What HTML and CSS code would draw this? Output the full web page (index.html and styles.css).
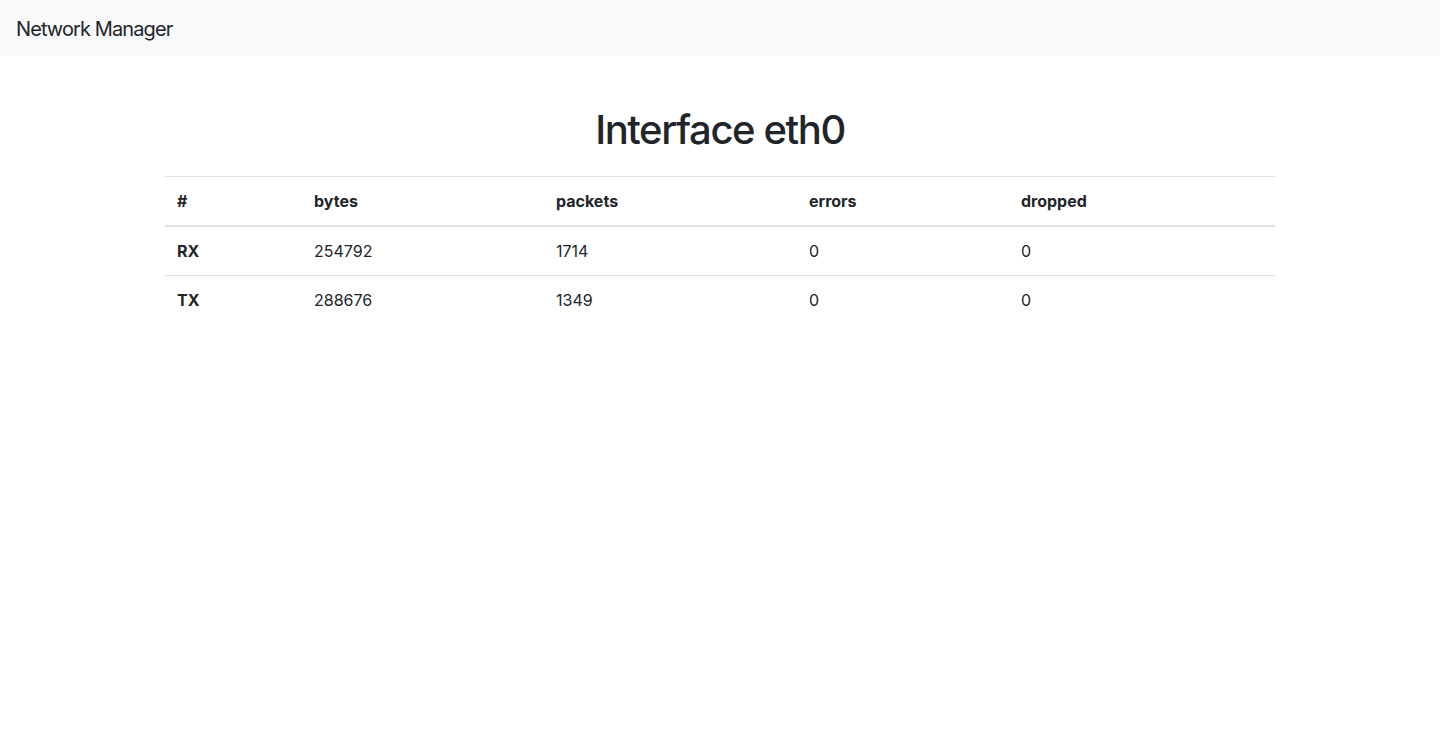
FILE: index.html
```html
<!DOCTYPE html>
<html lang="en">
<head>
<meta charset="utf-8">
<title>Network Manager</title>
<link rel="stylesheet" href="styles.css">
</head>
<body>
<nav class="navbar">
  <a class="brand" href="#">Network Manager</a>
</nav>
<main class="container">
  <h1 class="title">Interface eth0</h1>
  <table class="table">
    <colgroup>
      <col class="c1"><col class="c2"><col class="c3"><col class="c4"><col class="c5">
    </colgroup>
    <thead>
      <tr><th>#</th><th>bytes</th><th>packets</th><th>errors</th><th>dropped</th></tr>
    </thead>
    <tbody>
      <tr><th>RX</th><td>254792</td><td>1714</td><td>0</td><td>0</td></tr>
      <tr><th>TX</th><td>288676</td><td>1349</td><td>0</td><td>0</td></tr>
    </tbody>
  </table>
</main>
</body>
</html>
```
FILE: styles.css
```css
* { box-sizing: border-box; }
html, body { margin: 0; padding: 0; }
body {
  font-family: Inter, "Noto Sans", "Liberation Sans", sans-serif;
  font-size: 16px;
  line-height: 1.5;
  color: #212529;
  background: #fff;
}
.navbar {
  height: 56px;
  background: #f8f9fa;
  display: flex;
  align-items: center;
  padding: 2px 16px 0;
}
.brand {
  font-size: 20px;
  line-height: 30px;
  letter-spacing: -0.9px;
  color: #212529;
  text-decoration: none;
}
.container {
  width: 1110px;
  margin: 0 auto;
  padding-top: 50px;
}
.title {
  margin: 0 0 22px;
  text-align: center;
  font-size: 40px;
  line-height: 48px;
  font-weight: 500;
  letter-spacing: -1.4px;
}
.table {
  width: 100%;
  border-collapse: collapse;
}
.c1 { width: 137px; }
.c2 { width: 242px; }
.c3 { width: 253px; }
.c4 { width: 212px; }
.c5 { width: 266px; }
.table th, .table td {
  padding: 12px;
  text-align: left;
  vertical-align: top;
  border-top: 1px solid #dee2e6;
  line-height: 24px;
}
.table th { font-weight: 700; }
.table thead th {
  border-bottom: 2px solid #dee2e6;
}
```
